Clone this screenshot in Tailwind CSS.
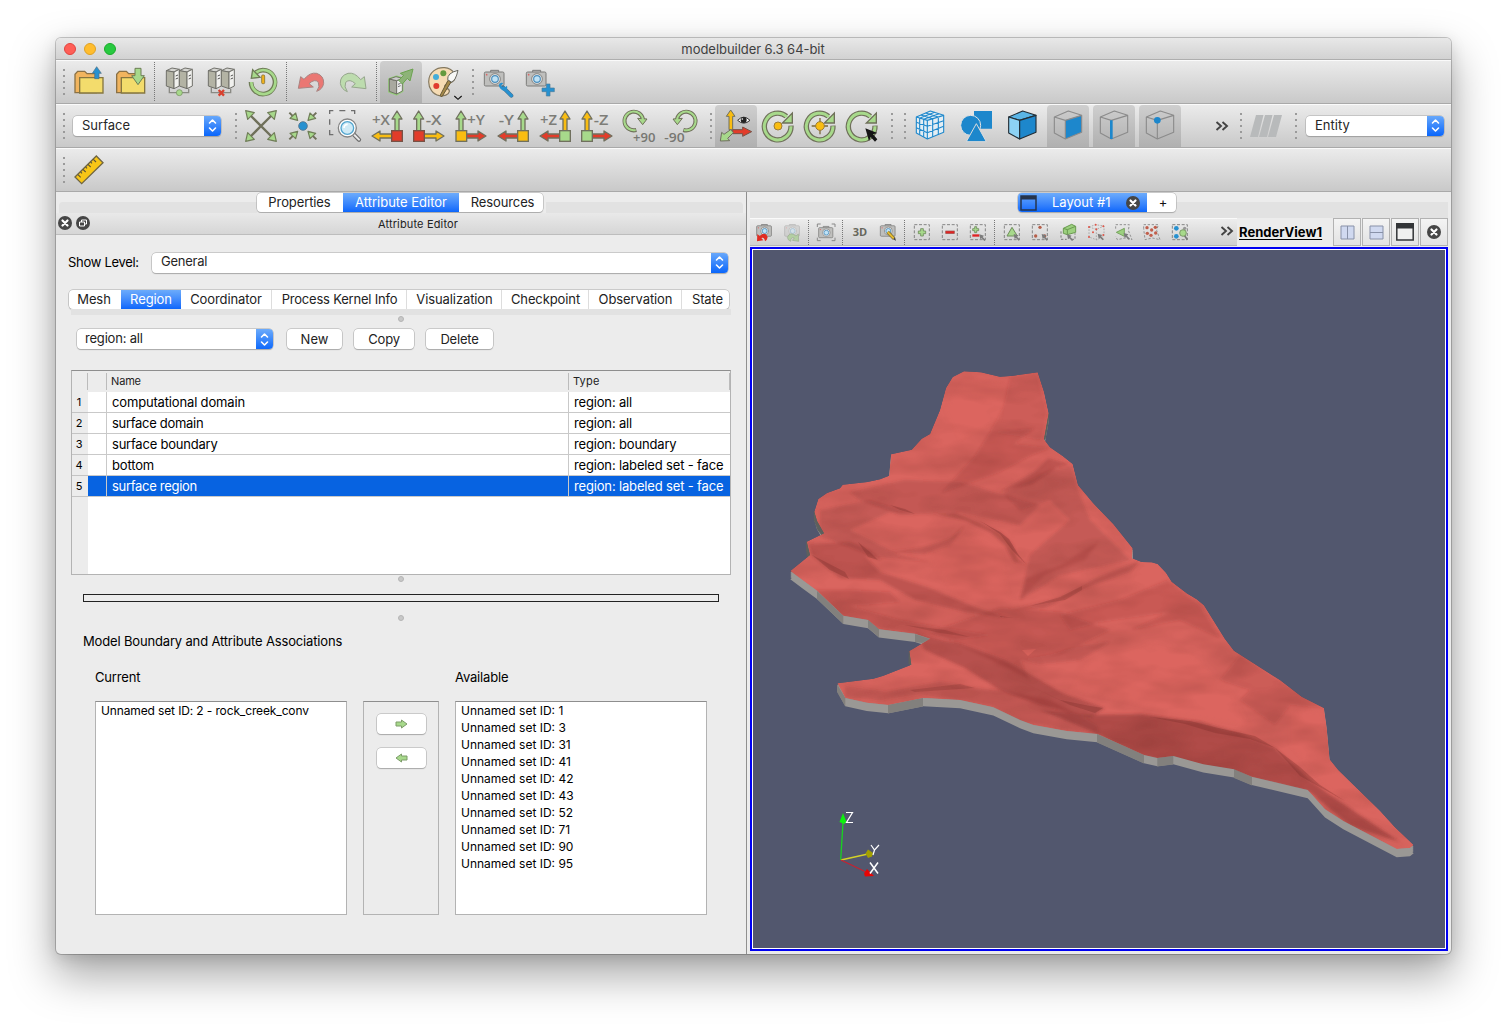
<!DOCTYPE html>
<html lang="en">
<head>
<meta charset="utf-8">
<title>modelbuilder 6.3 64-bit</title>
<script src="https://cdn.jsdelivr.net/npm/@tailwindcss/browser@4"></script>
</head>
<body class="h-[1028px] w-[1507px] overflow-hidden bg-white pt-[38px] pl-[56px] font-['Inter',sans-serif] text-[13px] text-black">

<!-- shared icon parts -->
<svg class="absolute size-0">
  <defs>
    <linearGradient id="chev" x1="0" y1="0" x2="0" y2="1"><stop offset="0" stop-color="#6cabfb"/><stop offset="1" stop-color="#0a66fb"/></linearGradient>
    <g id="cam"><path d="M-13,-21V-26H11V-21" fill="#c9c9c9" stroke="#777" stroke-width="3"/><rect x="-32" y="-21" width="59" height="42" rx="4" fill="#bfbfbd" stroke="#7b7b79" stroke-width="3"/><circle r="16" fill="#e9e9e9" stroke="#858583" stroke-width="3"/><circle r="10" fill="#bfe2f6" stroke="#4c8fbd" stroke-width="3.5"/><circle cx="-25" cy="-13" r="2.5" fill="#d66"/></g>
    <g id="srv" stroke="#6f6f69" stroke-width="3" stroke-linejoin="round"><path d="M0,8L17,0L39,4L23,12Z" fill="#d6d6d2"/><path d="M0,8L23,12V62L0,54Z" fill="#b3b3a4"/><path d="M23,12L39,4V54L23,62Z" fill="#f1f1ee"/><path d="M28,24L35,21M28,33L35,30" stroke="#555"/></g>
    <g id="wire" fill="none" stroke="#8b8b8b" stroke-width="3.4" stroke-linejoin="round"><path d="M0,18L42,0L82,13V64L33,84L0,66ZM0,18L33,28L82,13M33,28V84"/></g>
    <g id="up" stroke="#70705e" stroke-width="4" stroke-linejoin="round"><path d="M-6,0V-36H-15L0,-60L15,-36H6V0Z"/></g>
    <g id="rot"><path d="M86,46A40,40 0 1 1 72,18" fill="none" stroke="#6f705a" stroke-width="16"/><path d="M60,38H90V8Z" fill="#a7d98b" stroke="#6f705a" stroke-width="4"/><path d="M86,48A40,40 0 1 1 74,20" fill="none" stroke="#a7d98b" stroke-width="9"/></g>
    <g id="dash"><rect x="0" y="0" width="45" height="45" fill="none" stroke="#858585" stroke-width="3" stroke-dasharray="9 5"/></g>
    <g id="ptr"><path d="M0,0L14,4L10,8L19,17L15,20L7,12L3,15Z" fill="#7b7b7b"/></g>
    <g id="ud" fill="none" stroke="#fff" stroke-width="1.6" stroke-linecap="round" stroke-linejoin="round"><path d="M5.5,8L8.5,5L11.5,8M5.5,13L8.5,16L11.5,13"/></g>
    <g id="xx"><circle cx="7" cy="7" r="7" fill="#464646"/><path d="M4.5,4.5L9.5,9.5M9.5,4.5L4.5,9.5" stroke="#fff" stroke-width="2.2" stroke-linecap="round"/></g>
  </defs>
</svg>

<main class="flex h-[916px] w-[1395px] flex-col overflow-hidden rounded-[5px] bg-[#ececec] shadow-[0_0_0_1px_rgba(0,0,0,0.2),0_20px_44px_2px_rgba(0,0,0,0.34),0_4px_16px_rgba(0,0,0,0.13)]">

  <!-- title bar -->
  <header class="flex h-[22px] shrink-0 items-center border-b border-[#aeaeae] bg-linear-to-b from-[#e8e8e8] to-[#d2d2d2] pl-2">
    <div class="flex gap-2">
      <i class="size-3 rounded-full border border-[#e0443e] bg-[#ff5f57]"></i>
      <i class="size-3 rounded-full border border-[#dea123] bg-[#ffbd2e]"></i>
      <i class="size-3 rounded-full border border-[#1aab29] bg-[#28c940]"></i>
    </div>
    <h1 class="w-[1274px] pt-[2px] text-center text-[13px] leading-none tracking-[-0.05px] text-[#404040]">modelbuilder 6.3 64-bit</h1>
  </header>

  <!-- file toolbar -->
  <div class="flex h-[44px] shrink-0 items-center border-t border-b border-t-[#fafafa] border-b-[#a9a9a9] bg-linear-to-b from-[#ebebeb] to-[#c9c9c9]">
    <i class="mr-[3px] ml-[7px] h-[26px] w-[2px] bg-[repeating-linear-gradient(to_bottom,#9a9a9a_0_2px,transparent_2px_6px)]"></i>
    <svg class="size-[42px] shrink-0" viewBox="55 93 126 126"><path d="M76,188V133L84,124H105L112,131H140V188Z" fill="#f1b45e" stroke="#8a7146" stroke-width="4"/><path d="M90,189V143H160V189Z" fill="#f3dc6c" stroke="#85763f" stroke-width="4"/><path d="M135,146V130H128L141,110L155,130H148V146Z" fill="#2791d0" stroke="#4e6e80" stroke-width="2"/></svg>
    <svg class="size-[42px] shrink-0" viewBox="181 93 126 126"><path d="M201,188V133L209,124H230L237,131H265V188Z" fill="#f1b45e" stroke="#8a7146" stroke-width="4"/><path d="M215,189V143H285V189Z" fill="#f3dc6c" stroke="#85763f" stroke-width="4"/><path d="M256,115H274V137H284L265,164L246,137H256Z" fill="#a7d98b" stroke="#6c7d55" stroke-width="3"/></svg>
    <i class="mr-[3px] ml-[2px] h-[40px] w-px bg-[repeating-linear-gradient(to_bottom,#777_0_1px,transparent_1px_2px)]"></i>
    <svg class="size-[42px] shrink-0" viewBox="180 93 126 126"><g transform="translate(-144 0)"><path d="M358,172V188H416V176" fill="none" stroke="#8a8a84" stroke-width="4"/><use href="#srv" x="349" y="114"/><use href="#srv" x="388" y="114"/><circle cx="388" cy="188" r="9" fill="#a7d98b" stroke="#708a5b" stroke-width="2"/></g></svg>
    <svg class="size-[42px] shrink-0" viewBox="450 93 126 126"><path d="M484,172V188H542V176" fill="none" stroke="#8a8a84" stroke-width="4"/><use href="#srv" x="475" y="114"/><use href="#srv" x="514" y="114"/><path d="M506,180L522,197M522,180L506,197" stroke="#d8412f" stroke-width="7"/></svg>
    <svg class="size-[42px] shrink-0" viewBox="576 93 126 126"><path d="M603,156A36,36 0 1 0 618,127" fill="none" stroke="#6f7d57" stroke-width="14"/><path d="M608,119L604,145L630,142Z" fill="#a7d98b" stroke="#6f7d57" stroke-width="4"/><path d="M604,156A36,36 0 1 0 619,127" fill="none" stroke="#a7d98b" stroke-width="8"/><rect x="635" y="135" width="9" height="26" rx="3" fill="#f3b21b" stroke="#84733a" stroke-width="2.5"/></svg>
    <i class="mr-[3px] ml-[2px] h-[40px] w-px bg-[repeating-linear-gradient(to_bottom,#777_0_1px,transparent_1px_2px)]"></i>
    <svg class="size-[42px] shrink-0" viewBox="720 93 126 126"><path d="M745,175L752,140L762,148Q780,126 800,130Q822,137 821,160Q818,178 800,184Q811,170 805,157Q795,145 777,161L790,171Z" fill="#ea7773" stroke="#a98482" stroke-width="3"/></svg>
    <svg class="size-[42px] shrink-0" viewBox="846 93 126 126"><path d="M948,176L943,140L932,149Q914,126 894,130Q870,137 871,160Q874,178 892,185Q881,170 887,157Q899,145 916,161L905,171Z" fill="#bddcae" stroke="#96a68c" stroke-width="3"/></svg>
    <i class="mr-[3px] ml-[2px] h-[40px] w-px bg-[repeating-linear-gradient(to_bottom,#777_0_1px,transparent_1px_2px)]"></i>
    <div class="h-[42px] w-[42px] shrink-0 rounded-t bg-linear-to-b from-[#cfcfcf] to-[#b0b0b0]"><svg class="size-[42px]" viewBox="30 18 126 126"><path d="M58,72L80,65L97,70V108L80,118L58,110Z" fill="#c5c5be" stroke="#94ce77" stroke-width="7" stroke-linejoin="round"/><path d="M58,72L80,77V117L58,109Z" fill="#a9a99f" stroke="#65655c" stroke-width="2.5"/><path d="M80,77L97,70V108L80,117Z" fill="#eee" stroke="#65655c" stroke-width="2.5"/><path d="M58,72L78,65L97,70L80,77Z" fill="#ccc" stroke="#65655c" stroke-width="2.5"/><path d="M84,88L92,85M84,95L92,92" stroke="#555" stroke-width="2.5"/><path d="M91,55L129,42L120,78L112,70L97,87L86,76L101,61Z" fill="#8db378" stroke="#6ba34f" stroke-width="3"/></svg></div>
    <svg class="size-[42px] shrink-0" viewBox="156 18 126 126"><path d="M176,80C176,52 200,36 224,38C250,41 262,62 252,76C242,88 224,84 224,94C226,104 240,98 238,110C236,120 222,124 208,122C188,118 176,100 176,80Z" fill="#f6dcb4" stroke="#84785f" stroke-width="3.5"/><circle cx="220" cy="55" r="9" fill="#659a3e"/><circle cx="198" cy="66" r="9" fill="#45add8"/><circle cx="199" cy="93" r="9" fill="#e03a2e"/><path d="M210,122L234,76L243,81L216,125Z" fill="#a68a4a" stroke="#675a38" stroke-width="3"/><path d="M233,74Q231,54 264,46Q257,78 244,81Z" fill="#f7f7f5" stroke="#686860" stroke-width="3"/><path d="M253,123L264,133L275,123" fill="none" stroke="#111" stroke-width="3.5"/></svg>
    <i class="mr-[3px] ml-[8px] h-[26px] w-[2px] bg-[repeating-linear-gradient(to_bottom,#9a9a9a_0_2px,transparent_2px_6px)]"></i>
    <svg class="size-[42px] shrink-0" viewBox="321 18 126 126"><use href="#cam" x="375" y="72"/><path d="M399,97L424,122" stroke="#4a6f88" stroke-width="12" stroke-linecap="round"/><path d="M386,91Q388,80 400,84L393,92L402,100L411,92Q414,104 405,108Q391,107 386,91Z" fill="#2791d0"/><path d="M401,99L424,122" stroke="#2791d0" stroke-width="9" stroke-linecap="round"/></svg>
    <svg class="size-[42px] shrink-0" viewBox="447 18 126 126"><use href="#cam" x="501" y="72"/><path d="M529,87H540V99H553V110H540V123H529V110H516V99H529Z" fill="#2791d0" stroke="#4d7c99" stroke-width="2"/></svg>
  </div>

  <!-- view toolbar -->
  <div class="flex h-[44px] shrink-0 items-center border-t border-b border-t-[#fafafa] border-b-[#a9a9a9] bg-linear-to-b from-[#ebebeb] to-[#c9c9c9]">
    <i class="mr-[8px] ml-[7px] h-[26px] w-[2px] shrink-0 bg-[repeating-linear-gradient(to_bottom,#9a9a9a_0_2px,transparent_2px_6px)]"></i>
    <div class="mb-px flex h-[20px] w-[148px] shrink-0 items-center justify-between overflow-hidden rounded-[4px] bg-white pl-[9px] text-[#262626] shadow-[0_0_0_0.5px_#a8a8a8,0_1px_1px_#9a9a9a]"><span class="pb-px leading-none">Surface</span><svg class="h-[21px] w-[17px]" viewBox="0 0 17 21"><rect width="17" height="21" fill="url(#chev)"/><use href="#ud"/></svg></div>
    <i class="mr-[3px] ml-[14px] h-[26px] w-[2px] shrink-0 bg-[repeating-linear-gradient(to_bottom,#9a9a9a_0_2px,transparent_2px_6px)]"></i>
    <svg class="size-[42px] shrink-0" viewBox="570 225 126 126"><path d="M600,255L666,321M666,255L600,321" stroke="#6f705a" stroke-width="7"/><g fill="#a7d98b" stroke="#6f7d57" stroke-width="3.5" stroke-linejoin="round"><path d="M587,242L613,248L593,268Z"/><path d="M679,242L653,248L673,268Z"/><path d="M587,334L613,328L593,308Z"/><path d="M679,334L653,328L673,308Z"/></g></svg>
    <svg class="size-[42px] shrink-0" viewBox="696 225 126 126"><path d="M718,248L736,266M799,248L781,266M718,328L736,310M799,328L781,310" stroke="#6f705a" stroke-width="6"/><g fill="#a7d98b" stroke="#6f7d57" stroke-width="3.5" stroke-linejoin="round"><path d="M743,271L720,265L737,249Z"/><path d="M774,271L797,265L780,249Z"/><path d="M743,304L720,310L737,326Z"/><path d="M774,304L797,310L780,326Z"/></g><circle cx="759" cy="288" r="13" fill="#2791d0" stroke="#56748a" stroke-width="2.5"/></svg>
    <svg class="size-[42px] shrink-0" viewBox="822 225 126 126"><path d="M850,242H839V252M839,268V284M839,300V314H850M868,242H886M903,242H914V252" fill="none" stroke="#6e6e6e" stroke-width="4"/><path d="M911,313L927,329" stroke="#6f6f6f" stroke-width="13" stroke-linecap="round"/><path d="M913,315L927,329" stroke="#e8e8e8" stroke-width="6" stroke-linecap="round"/><circle cx="892" cy="294" r="27" fill="#fff" stroke="#858585" stroke-width="4"/><circle cx="892" cy="294" r="19" fill="#cfeaf6" stroke="#54a6cf" stroke-width="4"/><path d="M882,294A11,11 0 0 1 893,283" stroke="#fff" stroke-width="5" fill="none"/></svg>
    <svg class="size-[42px] shrink-0 font-['Open_Sans'] text-[41px] font-semibold" viewBox="-12 150 126 126"><text x="6" y="210" textLength="54" lengthAdjust="spacingAndGlyphs" fill="#7d7d78">+X</text><use href="#up" x="81" y="228" fill="#a7d98b"/><use href="#up" transform="translate(66 243) rotate(-90)" fill="#f9bd12"/><rect x="65" y="227" width="32" height="32" fill="#e23c2a" stroke="#775246" stroke-width="4"/></svg>
    <svg class="size-[42px] shrink-0 font-['Open_Sans'] text-[41px] font-semibold" viewBox="114 150 126 126"><text x="167" y="210" textLength="48" lengthAdjust="spacingAndGlyphs" fill="#7d7d78">-X</text><use href="#up" x="146" y="228" fill="#a7d98b"/><use href="#up" transform="translate(162 243) rotate(90)" fill="#f9bd12"/><rect x="131" y="227" width="32" height="32" fill="#e23c2a" stroke="#775246" stroke-width="4"/></svg>
    <svg class="size-[42px] shrink-0 font-['Open_Sans'] text-[41px] font-semibold" viewBox="240 150 126 126"><text x="291" y="210" textLength="54" lengthAdjust="spacingAndGlyphs" fill="#7d7d78">+Y</text><use href="#up" x="273" y="228" fill="#a7d98b"/><use href="#up" transform="translate(288 243) rotate(90)" fill="#e23c2a"/><rect x="258" y="227" width="32" height="32" fill="#f9bd12" stroke="#70705e" stroke-width="4"/></svg>
    <svg class="size-[42px] shrink-0 font-['Open_Sans'] text-[41px] font-semibold" viewBox="366 150 126 126"><text x="386" y="210" textLength="46" lengthAdjust="spacingAndGlyphs" fill="#7d7d78">-Y</text><use href="#up" x="459" y="228" fill="#a7d98b"/><use href="#up" transform="translate(444 243) rotate(-90)" fill="#e23c2a"/><rect x="443" y="227" width="32" height="32" fill="#f9bd12" stroke="#70705e" stroke-width="4"/></svg>
    <svg class="size-[42px] shrink-0 font-['Open_Sans'] text-[41px] font-semibold" viewBox="492 150 126 126"><text x="510" y="210" textLength="51" lengthAdjust="spacingAndGlyphs" fill="#7d7d78">+Z</text><use href="#up" x="585" y="228" fill="#f9bd12"/><use href="#up" transform="translate(570 243) rotate(-90)" fill="#e23c2a"/><rect x="569" y="227" width="32" height="32" fill="#a7d98b" stroke="#70705e" stroke-width="4"/></svg>
    <svg class="size-[42px] shrink-0 font-['Open_Sans'] text-[41px] font-semibold" viewBox="618 150 126 126"><text x="671" y="210" textLength="44" lengthAdjust="spacingAndGlyphs" fill="#7d7d78">-Z</text><use href="#up" x="651" y="228" fill="#f9bd12"/><use href="#up" transform="translate(666 243) rotate(90)" fill="#e23c2a"/><rect x="635" y="227" width="32" height="32" fill="#a7d98b" stroke="#70705e" stroke-width="4"/></svg>
    <svg class="size-[42px] shrink-0 font-['Open_Sans'] text-[36px] font-semibold" viewBox="744 150 126 126"><path d="M799,225A28,28 0 1 1 819,193" fill="none" stroke="#6f705a" stroke-width="12"/><path d="M803,190L831,192L818,209Z" fill="#a7d98b" stroke="#6f705a" stroke-width="3"/><path d="M797,225A28,28 0 1 1 819,195" fill="none" stroke="#a7d98b" stroke-width="6"/><text x="789" y="260" textLength="67" lengthAdjust="spacingAndGlyphs" fill="#777772">+90</text></svg>
    <svg class="size-[42px] shrink-0 font-['Open_Sans'] text-[36px] font-semibold" viewBox="870 150 126 126"><path d="M940,225A28,28 0 1 0 921,193" fill="none" stroke="#6f705a" stroke-width="12"/><path d="M937,190L909,192L922,209Z" fill="#a7d98b" stroke="#6f705a" stroke-width="3"/><path d="M942,225A28,28 0 1 0 921,195" fill="none" stroke="#a7d98b" stroke-width="6"/><text x="883" y="260" textLength="61" lengthAdjust="spacingAndGlyphs" fill="#777772">-90</text></svg>
    <i class="mr-[3px] ml-[8px] h-[26px] w-[2px] shrink-0 bg-[repeating-linear-gradient(to_bottom,#9a9a9a_0_2px,transparent_2px_6px)]"></i>
    <div class="size-[42px] shrink-0 rounded-t bg-linear-to-b from-[#cfcfcf] to-[#b0b0b0]"><svg class="size-[42px]" viewBox="75 30 126 126"><path d="M117,104V64H109L122,45L135,64H128V104Z" fill="#f9bd12" stroke="#70705e" stroke-width="3"/><path d="M128,104H158V96L185,110L158,124V116H128Z" fill="#e23c2a" stroke="#775246" stroke-width="3"/><path d="M122,104L130,113L113,130L119,137L91,138L95,112L102,118Z" fill="#a7d98b" stroke="#70705e" stroke-width="3"/><path d="M143,76Q161,57 180,76Q161,93 143,76Z" fill="#fff" stroke="#333" stroke-width="3"/><circle cx="161" cy="75" r="9" fill="#222"/><circle cx="157" cy="72" r="2.5" fill="#fff"/></svg></div>
    <svg class="size-[42px] shrink-0" viewBox="201 30 126 126"><use href="#rot" x="217" y="46"/><circle cx="264" cy="93" r="12" fill="#f9bd12" stroke="#9c7c37" stroke-width="3"/></svg>
    <svg class="size-[42px] shrink-0" viewBox="327 30 126 126"><use href="#rot" x="343" y="46"/><path d="M365,93H414M390,69V118" stroke="#7b6a3b" stroke-width="4"/><circle cx="390" cy="93" r="13" fill="#f9bd12" stroke="#9c7c37" stroke-width="3"/></svg>
    <svg class="size-[42px] shrink-0" viewBox="453 30 126 126"><use href="#rot" x="469" y="46"/><path d="M526,100L562,114L549,118L562,133L555,140L542,126L537,138Z" fill="#161616"/></svg>
    <i class="ml-[8px] h-[26px] w-[2px] shrink-0 bg-[repeating-linear-gradient(to_bottom,#9a9a9a_0_2px,transparent_2px_6px)]"></i>
    <i class="mr-[3px] ml-[11px] h-[26px] w-[2px] shrink-0 bg-[repeating-linear-gradient(to_bottom,#9a9a9a_0_2px,transparent_2px_6px)]"></i>
    <div class="flex shrink-0 gap-1">
      <svg class="size-[42px]" viewBox="657 30 126 126"><g transform="translate(679 48)" stroke="#2189cc" stroke-width="3.4" stroke-linejoin="round"><path d="M0,18L42,0L82,13V64L33,84L0,66Z" fill="#e4eef4"/><path fill="none" d="M0,18L33,28L82,13M33,28V84M0,34L33,46L82,29M0,50L33,65L82,46M10,21V71M22,25V77M49,22V78M66,17V71M14,12L49,23M28,6L66,18M11,21L55,4M22,25L68,8"/></g></svg>
      <svg class="size-[42px]" viewBox="795 30 126 126"><path d="M852,48H906V101H852Z" fill="#1d87cc"/><circle cx="842" cy="91" r="30" fill="#1d87cc" stroke="#e3e3e3" stroke-width="3"/><path d="M859,86L889,140H829Z" fill="#1d87cc" stroke="#dcdcdc" stroke-width="3"/></svg>
      <svg class="size-[42px]" viewBox="933 30 126 126"><g transform="translate(956 48)" stroke="#222d35" stroke-width="3.4" stroke-linejoin="round"><path d="M0,18L42,0L82,13L33,28Z" fill="#5ab5e6"/><path d="M0,18L33,28V84L0,66Z" fill="#8dd2f4"/><path d="M33,28L82,13V64L33,84Z" fill="#1d87cc"/></g></svg>
      <div class="size-[42px] rounded-t bg-linear-to-b from-[#cfcfcf] to-[#b0b0b0]"><svg class="size-[42px]" viewBox="1071 30 126 126"><path d="M1126,76L1175,61V112L1126,132Z" fill="#1d87cc"/><use href="#wire" x="1093" y="48"/></svg></div>
      <div class="size-[42px] rounded-t bg-linear-to-b from-[#cfcfcf] to-[#b0b0b0]"><svg class="size-[42px]" viewBox="39 30 126 126"><use href="#wire" x="61" y="48"/><path d="M94,76V132" stroke="#1d87cc" stroke-width="8"/></svg></div>
      <div class="size-[42px] rounded-t bg-linear-to-b from-[#cfcfcf] to-[#b0b0b0]"><svg class="size-[42px]" viewBox="177 30 126 126"><use href="#wire" x="199" y="48"/><circle cx="232" cy="76" r="10" fill="#1d87cc"/></svg></div>
    </div>
    <svg class="ml-[34px] h-[12px] w-[14px] shrink-0" viewBox="0 0 14 12"><path d="M1.5,2L6,6L1.5,10M7.5,2L12,6L7.5,10" fill="none" stroke="#444" stroke-width="1.9"/></svg>
    <i class="mr-[7px] ml-[11px] h-[26px] w-[2px] shrink-0 bg-[repeating-linear-gradient(to_bottom,#9a9a9a_0_2px,transparent_2px_6px)]"></i>
    <svg class="h-[24px] w-[34px] shrink-0" viewBox="0 0 34 24"><path d="M7,1H14.5L9,23H1ZM16,1H23.5L18,23H10ZM25,1H33L27,23H19Z" fill="#b8babb"/></svg>
    <i class="mr-[9px] ml-[12px] h-[26px] w-[2px] shrink-0 bg-[repeating-linear-gradient(to_bottom,#9a9a9a_0_2px,transparent_2px_6px)]"></i>
    <div class="mb-px flex h-[20px] w-[138px] shrink-0 items-center justify-between overflow-hidden rounded-[4px] bg-white pl-[9px] text-[#262626] shadow-[0_0_0_0.5px_#a8a8a8,0_1px_1px_#9a9a9a]"><span class="pb-px leading-none">Entity</span><svg class="h-[21px] w-[17px]" viewBox="0 0 17 21"><rect width="17" height="21" fill="url(#chev)"/><use href="#ud"/></svg></div>
  </div>

  <!-- ruler toolbar -->
  <div class="flex h-[44px] shrink-0 items-center border-t border-b border-t-[#fafafa] border-b-[#a9a9a9] bg-linear-to-b from-[#ebebeb] to-[#c9c9c9]">
    <i class="mr-[3px] ml-[7px] h-[26px] w-[2px] bg-[repeating-linear-gradient(to_bottom,#9a9a9a_0_2px,transparent_2px_6px)]"></i>
    <svg class="size-[42px]" viewBox="54 357 126 126"><path d="M75,441L139,378L159,398L95,461Z" fill="#f8c617" stroke="#6f6542" stroke-width="4"/><path d="M84,434L92,442M92,426L96,430M99,418L107,426M107,411L111,415M114,403L122,411M122,396L126,400M130,388L138,396" stroke="#5e5536" stroke-width="3.5"/></svg>
  </div>

  <div class="flex min-h-0 flex-1">
    <!-- attribute panel -->
    <section class="flex w-[691px] shrink-0 flex-col border-r border-[#8f8f8f]">
      <div class="flex h-[21px] items-end px-[3px]">
        <div class="h-[11px] w-[198px] rounded-tl bg-[#e2e2e2]"></div>
        <div class="flex h-[19px] w-[286px] self-center overflow-hidden rounded-[4px] bg-white text-center leading-[19px] shadow-[0_0_0_0.5px_#a8a8a8,0_1px_1px_#b0b0b0]">
          <span class="w-[86px] pr-px tracking-[-0.1px] text-[#222]">Properties</span><span class="w-[116px] bg-linear-to-b from-[#6cabfb] to-[#0b66fb] text-white">Attribute Editor</span><span class="w-[84px] pl-[3px] tracking-[-0.1px] text-[#222]">Resources</span>
        </div>
        <div class="ml-[3px] h-[11px] flex-1 rounded-tr bg-[#e2e2e2]"></div>
      </div>
      <div class="flex h-[22px] items-center border-b border-[#bdbdbd] bg-linear-to-b from-[#e9e9e9] to-[#d6d6d6] pl-[2px]">
        <svg class="mb-px size-[14px]" viewBox="0 0 14 14"><use href="#xx"/></svg>
        <svg class="mb-px ml-1 size-[14px]" viewBox="0 0 14 14"><circle cx="7" cy="7" r="7" fill="#464646"/><path d="M5.5,4H10.5V8H5.5Z" fill="none" stroke="#fff" stroke-width="1"/><path d="M3.5,6H8.5V10H3.5Z" fill="#464646" stroke="#fff" stroke-width="1"/></svg>
        <h2 class="w-[656px] pt-[2px] text-center text-[11px] leading-none tracking-[0.15px] text-[#222]">Attribute Editor</h2>
      </div>

      <div class="mt-[17px] ml-[12px] flex h-[21px] items-center">
        <span class="w-[84px] leading-none tracking-[-0.3px]">Show Level:</span>
        <div class="flex h-[20px] w-[576px] items-center justify-between overflow-hidden rounded-[4px] bg-white pl-[9px] text-[#262626] shadow-[0_0_0_0.5px_#a8a8a8,0_1px_1px_#b0b0b0]"><span class="pb-[2px] leading-none tracking-[-0.25px]">General</span><svg class="h-[21px] w-[17px]" viewBox="0 0 17 21"><rect width="17" height="21" fill="url(#chev)"/><use href="#ud"/></svg></div>
      </div>

      <nav class="mt-[17px] ml-[13px] flex h-[19px] w-[660px] overflow-hidden rounded-[4px] bg-white text-center leading-[19px] tracking-[-0.1px] text-[#222] shadow-[0_0_0_0.5px_#a8a8a8,0_1px_1px_#b0b0b0]">
        <span class="w-[52px] pr-[2px]">Mesh</span><span class="w-[60px] bg-linear-to-b from-[#6cabfb] to-[#0b66fb] text-white">Region</span><span class="w-[91px] border-r border-[#ddd]">Coordinator</span><span class="w-[135px] border-r border-[#ddd] pl-px tracking-[-0.2px]">Process Kernel Info</span><span class="w-[95px] border-r border-[#ddd] pl-px">Visualization</span><span class="w-[87px] border-r border-[#ddd] pl-px">Checkpoint</span><span class="w-[93px] border-r border-[#ddd] pl-px">Observation</span><span class="w-[47px] pl-[4px]">State</span>
      </nav>
      <div class="ml-[15px] h-[6px] w-[660px] bg-[#e2e2e2]"></div>
      <i class="mt-px ml-[342px] size-[6px] rounded-full border border-[#b5b5b5] bg-[#c8c8c8]"></i>

      <div class="mt-[7px] ml-[21px] flex h-[19px] text-[#222]">
        <div class="flex h-[20px] w-[196px] items-center justify-between overflow-hidden rounded-[4px] bg-white pl-[8px] shadow-[0_0_0_0.5px_#a8a8a8,0_1px_1px_#b0b0b0]"><span class="pb-px leading-none tracking-[-0.2px]">region: all</span><svg class="h-[21px] w-[17px]" viewBox="0 0 17 21"><rect width="17" height="21" fill="url(#chev)"/><use href="#ud"/></svg></div>
        <button class="ml-[14px] h-[20px] w-[55px] rounded-[4px] bg-white leading-none shadow-[0_0_0_0.5px_#a8a8a8,0_1px_1px_#b0b0b0]">New</button>
        <button class="ml-[12px] h-[20px] w-[60px] rounded-[4px] bg-white leading-none tracking-[-0.2px] shadow-[0_0_0_0.5px_#a8a8a8,0_1px_1px_#b0b0b0]">Copy</button>
        <button class="ml-[12px] h-[20px] w-[67px] rounded-[4px] bg-white leading-none tracking-[-0.2px] shadow-[0_0_0_0.5px_#a8a8a8,0_1px_1px_#b0b0b0]">Delete</button>
      </div>

      <!-- attribute table -->
      <div class="mt-[22px] ml-[15px] flex h-[205px] w-[660px] flex-col border border-[#b3b3b3] border-t-[#8e8e8e] bg-[linear-gradient(to_right,#ececec_16px,#fff_16px)] tracking-[-0.16px]">
        <div class="flex h-[21px] shrink-0 bg-[#ececec] pt-[2px] text-[11px] leading-[17px] text-[#222]"><span class="h-[17px] w-[16px] border-r border-[#bbb]"></span><span class="h-[17px] w-[19px] border-r border-[#bbb]"></span><span class="h-[17px] w-[462px] border-r border-[#bbb] pl-[4px]">Name</span><span class="h-[17px] flex-1 border-r border-[#bbb] pl-[4px] tracking-[0.2px]">Type</span></div>
        <div class="flex h-[21px] shrink-0 leading-[21px]"><span class="w-[16px] border-b border-[#c4c4c4] pr-[2px] text-center text-[11px]">1</span><span class="w-[19px] border-r border-b border-[#c9c9c9]"></span><span class="w-[462px] border-r border-b border-[#c9c9c9] pl-[5px]">computational domain</span><span class="flex-1 border-b border-[#c9c9c9] pl-[5px]">region: all</span></div>
        <div class="flex h-[21px] shrink-0 leading-[21px]"><span class="w-[16px] border-b border-[#c4c4c4] pr-[2px] text-center text-[11px]">2</span><span class="w-[19px] border-r border-b border-[#c9c9c9]"></span><span class="w-[462px] border-r border-b border-[#c9c9c9] pl-[5px] tracking-[-0.3px]">surface domain</span><span class="flex-1 border-b border-[#c9c9c9] pl-[5px]">region: all</span></div>
        <div class="flex h-[21px] shrink-0 leading-[21px]"><span class="w-[16px] border-b border-[#c4c4c4] pr-[2px] text-center text-[11px]">3</span><span class="w-[19px] border-r border-b border-[#c9c9c9]"></span><span class="w-[462px] border-r border-b border-[#c9c9c9] pl-[5px] tracking-[-0.22px]">surface boundary</span><span class="flex-1 border-b border-[#c9c9c9] pl-[5px]">region: boundary</span></div>
        <div class="flex h-[21px] shrink-0 leading-[21px]"><span class="w-[16px] border-b border-[#c4c4c4] pr-[2px] text-center text-[11px]">4</span><span class="w-[19px] border-r border-b border-[#c9c9c9]"></span><span class="w-[462px] border-r border-b border-[#c9c9c9] pl-[5px]">bottom</span><span class="flex-1 border-b border-[#c9c9c9] pl-[5px] whitespace-nowrap">region: labeled set - face</span></div>
        <div class="flex h-[21px] shrink-0 leading-[21px]"><span class="w-[16px] border-b border-[#c4c4c4] pr-[2px] text-center text-[11px]">5</span><span class="w-[19px] border-r border-b border-[#c9c9c9] bg-[#0763e1]"></span><span class="w-[462px] border-r border-b border-[#c9c9c9] bg-[#0763e1] pl-[5px] tracking-[-0.3px] text-white">surface region</span><span class="flex-1 border-b border-[#c9c9c9] bg-[#0763e1] pl-[5px] whitespace-nowrap text-white">region: labeled set - face</span></div>
      </div>
      <i class="mt-px ml-[342px] size-[6px] shrink-0 rounded-full border border-[#b5b5b5] bg-[#c8c8c8]"></i>
      <div class="mt-[12px] ml-[27px] h-[8px] w-[636px] shrink-0 border border-[#222]"></div>
      <i class="mt-[13px] ml-[342px] size-[6px] shrink-0 rounded-full border border-[#b5b5b5] bg-[#c8c8c8]"></i>

      <h3 class="mt-[12px] ml-[27px] h-[16px] leading-[16px] tracking-[-0.16px]">Model Boundary and Attribute Associations</h3>
      <div class="mt-[20px] ml-[39px] flex h-[16px] leading-[16px] tracking-[-0.17px]"><span class="w-[360px]">Current</span><span>Available</span></div>
      <div class="mt-[16px] ml-[39px] flex h-[214px] text-[12px] leading-[17px]">
        <ul class="w-[252px] border border-[#b3b3b3] border-t-[#8e8e8e] bg-white pl-[5px] tracking-[-0.13px]"><li>Unnamed set ID: 2 - rock_creek_conv</li></ul>
        <div class="mx-[16px] flex w-[76px] flex-col items-center gap-[14px] border border-[#b3b3b3] border-t-[#8e8e8e] pt-[12px]">
          <button class="flex h-[20px] w-[49px] items-center justify-center rounded-[4px] bg-white shadow-[0_0_0_0.5px_#a8a8a8,0_1px_1px_#b0b0b0]"><svg class="h-[10px] w-[13px]" viewBox="0 0 13 10"><path d="M1,3H6.5V1L12,5L6.5,9V7H1Z" fill="#a7d98b" stroke="#7c9c69"/></svg></button>
          <button class="flex h-[20px] w-[49px] items-center justify-center rounded-[4px] bg-white shadow-[0_0_0_0.5px_#a8a8a8,0_1px_1px_#b0b0b0]"><svg class="h-[10px] w-[13px]" viewBox="0 0 13 10"><path d="M12,3H6.5V1L1,5L6.5,9V7H12Z" fill="#a7d98b" stroke="#7c9c69"/></svg></button>
        </div>
        <ul class="w-[252px] border border-[#b3b3b3] border-t-[#8e8e8e] bg-white pl-[5px]"><li>Unnamed set ID: 1</li><li>Unnamed set ID: 3</li><li>Unnamed set ID: 31</li><li>Unnamed set ID: 41</li><li>Unnamed set ID: 42</li><li>Unnamed set ID: 43</li><li>Unnamed set ID: 52</li><li>Unnamed set ID: 71</li><li>Unnamed set ID: 90</li><li>Unnamed set ID: 95</li></ul>
      </div>
    </section>

    <!-- render view -->
    <section class="flex flex-1 flex-col pr-[3px] pl-[3px]">
      <div class="flex h-[26px] bg-[linear-gradient(to_bottom,#ececec_10px,#e2e2e2_10px)] pt-px pl-[268px]">
        <div class="flex h-[19px] w-[158px] overflow-hidden rounded-[4px] bg-white leading-[19px] shadow-[0_0_0_0.5px_#a8a8a8,0_1px_1px_#b0b0b0]">
          <div class="flex w-[129px] shrink-0 items-center bg-linear-to-b from-[#6cabfb] to-[#0b66fb] pl-[2px] text-white"><svg class="h-[16px] w-[17px]" viewBox="0 0 17 16"><path d="M1,1H16V15H1Z" fill="none" stroke="#26344c" stroke-width="1.5"/><path d="M1,1H16V4.5H1Z" fill="#26344c"/></svg><span class="ml-[15px]">Layout #1</span><svg class="ml-auto mr-[7px] size-[14px]" viewBox="0 0 14 14"><use href="#xx"/></svg></div>
          <span class="flex-1 pl-[3px] text-center text-[#111]">+</span>
        </div>
      </div>
      <div class="flex h-[28px] shrink-0">
        <div class="flex h-[28px] w-[487px] shrink-0 items-start border-t border-b border-t-[#fafafa] border-b-[#b5b5b5] bg-linear-to-b from-[#ededed] to-[#cfcfcf]">
          <svg class="h-[27px] w-[28px]" viewBox="15 85 84 81"><use href="#cam" transform="translate(59 121) scale(.75)"/><path d="M36,152L37,130L44,136Q62,121 68,140Q66,150 60,152Q58,138 49,142L55,149Z" fill="#e02c22"/></svg>
          <svg class="h-[27px] w-[28px]" viewBox="99 85 84 81"><use href="#cam" transform="translate(143 121) scale(.75)" opacity=".4"/><path d="M161,152L160,130L153,136Q135,121 127,140Q129,150 137,152Q137,138 148,142L142,149Z" fill="#b3cfa3" stroke="#9aab90" stroke-width="2"/></svg>
          <i class="mr-[3px] ml-[2px] mt-[1px] h-[25px] w-px bg-[repeating-linear-gradient(to_bottom,#777_0_1px,transparent_1px_2px)]"></i>
          <svg class="h-[27px] w-[28px]" viewBox="201 86 84 81"><use href="#cam" transform="translate(244 127) scale(.72)"/><path d="M217,110V101H227M260,101H270V110M217,142V151H227M260,151H270V142" fill="none" stroke="#888" stroke-width="3"/></svg>
          <i class="mr-[3px] ml-[2px] mt-[1px] h-[25px] w-px bg-[repeating-linear-gradient(to_bottom,#777_0_1px,transparent_1px_2px)]"></i>
          <span class="w-[28px] text-center font-['Open_Sans'] text-[11px] leading-[26px] font-bold text-[#67675c]">3D</span>
          <svg class="h-[27px] w-[28px]" viewBox="387 85 84 81"><use href="#cam" transform="translate(430 121) scale(.75)"/><path d="M428,124L447,144" stroke="#776a33" stroke-width="10"/><path d="M428,124L447,144" stroke="#e5bb30" stroke-width="6"/><path d="M444,146L453,150L450,140Z" fill="#444"/></svg>
          <i class="mr-[3px] ml-[2px] mt-[1px] h-[25px] w-px bg-[repeating-linear-gradient(to_bottom,#777_0_1px,transparent_1px_2px)]"></i>
          <svg class="h-[27px] w-[28px]" viewBox="489 86 84 81"><use href="#dash" x="508" y="103"/><path d="M527,115H535V122H542V130H535V137H527V130H520V122H527Z" fill="#a7d98b" stroke="#6f8d5c" stroke-width="2.5"/></svg>
          <svg class="h-[27px] w-[28px]" viewBox="573 86 84 81"><use href="#dash" x="592" y="103"/><rect x="602" y="122" width="26" height="8" fill="#e02424" stroke="#9d5550" stroke-width="2"/></svg>
          <svg class="h-[27px] w-[28px]" viewBox="657 86 84 81"><use href="#dash" x="676" y="103"/><path d="M689,109H695V115H701V121H695V127H689V121H683V115H689Z" fill="#a7d98b" stroke="#6f8d5c" stroke-width="2.5"/><rect x="682" y="132" width="21" height="7" fill="#e02424"/><use href="#ptr" x="703" y="132"/></svg>
          <i class="mr-[3px] ml-[2px] mt-[1px] h-[25px] w-px bg-[repeating-linear-gradient(to_bottom,#777_0_1px,transparent_1px_2px)]"></i>
          <svg class="h-[27px] w-[28px]" viewBox="759 86 84 81"><use href="#dash" x="778" y="103"/><path d="M801,111L817,137H786Z" fill="#a7d98b" stroke="#6f8d5c" stroke-width="3"/><use href="#ptr" x="806" y="131"/></svg>
          <svg class="h-[27px] w-[28px]" viewBox="843 86 84 81"><use href="#dash" x="862" y="103"/><g fill="#b65f4a"><circle cx="885" cy="111" r="5"/><circle cx="872" cy="137" r="5"/><circle cx="899" cy="137" r="5"/></g><use href="#ptr" x="890" y="131"/></svg>
          <svg class="h-[27px] w-[28px]" viewBox="927 87 84 81"><path d="M948,124V148H965M980,148H990V130" fill="none" stroke="#777" stroke-width="3" stroke-dasharray="7 5"/><path d="M955,115L980,103L992,109V127L967,134L955,130Z" fill="#9cd07f" stroke="#6a9a50" stroke-width="3"/><path d="M955,115L967,119L992,109M967,119V134" stroke="#6a9a50" stroke-width="3" fill="none"/><use href="#ptr" x="966" y="133"/></svg>
          <svg class="h-[27px] w-[28px]" viewBox="1011 86 84 81"><path d="M1032,110L1052,103L1077,107V136L1056,149L1032,140ZM1032,110L1054,117L1077,107M1054,117V149" fill="none" stroke="#a0a0a0" stroke-width="2.5" stroke-dasharray="5 4"/><g fill="#df5548"><circle cx="1032" cy="110" r="3"/><circle cx="1052" cy="103" r="3"/><circle cx="1075" cy="108" r="3"/><circle cx="1054" cy="117" r="3"/><circle cx="1032" cy="140" r="3"/><circle cx="1044" cy="126" r="3"/><circle cx="1075" cy="134" r="3"/></g><use href="#ptr" x="1058" y="130"/></svg>
          <svg class="h-[27px] w-[28px]" viewBox="45 86 84 81"><path d="M62,115V103H103L100,120L111,148L90,143L67,148L62,138" fill="none" stroke="#929292" stroke-width="3" stroke-dasharray="7 5"/><path d="M64,126L88,114V138Z" fill="#9cd07f" stroke="#6a9a50" stroke-width="2.5"/><use href="#ptr" x="86" y="128"/></svg>
          <svg class="h-[27px] w-[28px]" viewBox="129 86 84 81"><path d="M146,115V103H190L185,120L195,148L172,143L150,148Z" fill="none" stroke="#929292" stroke-width="3" stroke-dasharray="7 5"/><g fill="#c15e4b"><circle cx="156" cy="112" r="5"/><circle cx="170" cy="119" r="5"/><circle cx="181" cy="111" r="5"/><circle cx="157" cy="129" r="5"/><circle cx="168" cy="135" r="5"/><circle cx="182" cy="128" r="5"/></g></svg>
          <svg class="h-[27px] w-[28px]" viewBox="213 86 84 81"><use href="#dash" x="232" y="103"/><circle cx="244" cy="114" r="7" fill="#2791d0"/><circle cx="244" cy="138" r="7" fill="#2791d0"/><circle cx="269" cy="114" r="5" fill="#999"/><path d="M266,132L277,148" stroke="#777" stroke-width="5"/><circle cx="264" cy="128" r="10" fill="#a7d98b" stroke="#6f8d5c" stroke-width="2.5"/></svg>
          <svg class="mt-[6px] ml-[26px] h-[12px] w-[14px]" viewBox="0 0 14 12"><path d="M1.5,2L6,6L1.5,10M7.5,2L12,6L7.5,10" fill="none" stroke="#444" stroke-width="1.9"/></svg>
        </div>
        <a class="ml-[2px] w-[94px] text-[13px] leading-[29px] font-bold tracking-[0.02px] underline underline-offset-2">RenderView1</a>
        <div class="flex gap-px">
          <span class="flex h-[28px] w-[28px] items-center justify-center border border-[#b2b2b2] bg-linear-to-b from-[#f4f4f4] to-[#e2e2e2]"><svg class="size-[15px]" viewBox="0 0 15 15"><path d="M1,1H14V14H1ZM7.5,1V14" fill="#d0d9f0" stroke="#8891a8"/></svg></span>
          <span class="flex h-[28px] w-[28px] items-center justify-center border border-[#b2b2b2] bg-linear-to-b from-[#f4f4f4] to-[#e2e2e2]"><svg class="size-[15px]" viewBox="0 0 15 15"><path d="M1,1H14V14H1ZM1,7.5H14" fill="#d0d9f0" stroke="#8891a8"/></svg></span>
          <span class="flex h-[28px] w-[28px] items-center justify-center border border-[#b2b2b2] bg-linear-to-b from-[#f4f4f4] to-[#e2e2e2]"><svg class="h-[18px] w-[18px]" viewBox="0 0 18 18"><path d="M.8,1H17.2V17H.8Z" fill="#f0f0f0" stroke="#333538" stroke-width="1.5"/><path d="M0,0H18V5.5H0Z" fill="#333538"/></svg></span>
          <span class="flex h-[28px] w-[28px] items-center justify-center border border-[#b2b2b2] bg-linear-to-b from-[#f4f4f4] to-[#e2e2e2]"><svg class="size-[14px]" viewBox="0 0 14 14"><use href="#xx"/></svg></span>
        </div>
      </div>

      <div class="mt-px h-[704px] w-[698px] border-2 border-[#0000f2] bg-white p-px">
        <svg class="block h-[698px] w-[692px] bg-[#52576e]" viewBox="753 250 692 698">
          <defs>
            <path id="land" d="M790.3,571L810,555L806.7,541.7L824,533.3L817,521L814.3,511.7L818.3,499L827,493L840,488.3L842.7,484.7L867.3,482L880,479.3L889,475.7L891,454.3L911.7,449.7L921.7,438.7L930,434L940,410L946,388L952.7,377L964,371.3L981,372.3L1000,376.7L1013.3,375.7L1037.7,372.3L1044,391.7L1048.7,413.3L1044,439.3L1050,447.3L1062.7,456L1072.7,464L1078,485L1093.3,503.3L1113.3,524L1132.7,548.3L1132.3,558.3L1141.7,562L1151.7,562.3L1157.7,564L1166,572.7L1171.7,581.7L1186.7,593.3L1196.7,599.3L1204,605.3L1225,639L1234,650.7L1280,680L1301.7,696.7L1324,708L1326.7,726.7L1329.7,759.3L1338.3,770L1380,810.7L1395,827.3L1413.7,845L1410,848L1396.7,849L1373.3,836.7L1343.3,821L1325,809.3L1307.7,790L1251.7,776.7L1234,769.3L1203.3,764.3L1173.3,756L1157.3,758L1144,755L1097.3,734L1066.7,731L1033.3,725L1020,720L993.3,707.3L960,700L923.3,698L888.3,705L866.7,702.7L845.3,698L837.3,683.3L873.3,678.7L883.3,675.7L911.3,664.7L909.3,651L930,638.7L915,633.7L879,629.3L868,620L843.3,615.7L817,590.7L803.3,580.7Z"/>
            <clipPath id="lc"><use href="#land"/></clipPath>
            <filter id="soft" x="-10%" y="-10%" width="120%" height="120%"><feGaussianBlur stdDeviation="1.8"/></filter>
            <filter id="relief" x="0" y="0" width="100%" height="100%" color-interpolation-filters="sRGB"><feTurbulence type="fractalNoise" baseFrequency="0.016 0.04" numOctaves="3" seed="8"/><feColorMatrix values="0 0 0 0 0.42  0 0 0 0 0.16  0 0 0 0 0.14  1.7 0 0 0 -0.6"/></filter>
          </defs>
          <g fill="#9a9895"><use href="#land" transform="translate(0 2)"/><use href="#land" transform="translate(0 4)"/><use href="#land" transform="translate(0 6)"/><use href="#land" transform="translate(0 8.2)"/></g>
          <path fill="#82807d" d="M817,591L843.3,616V624L817,599ZM868,620L879,629V637.5L868,628ZM915,634L930,639L922,643L915,642ZM837,684L845.3,698V706.5L837,692ZM888,705L923,698V706.5L888,713.5ZM1097,734L1144,755V763.5L1097,742.5ZM1157.3,758L1173.3,756V764.5L1157.3,766.5ZM1234,769L1252,777V785.5L1234,778Z"/>
          <path fill="#5c605d" stroke="#5c605d" d="M814.3,511.7L824,533.3L822,535L818,530L814.3,520ZM806.7,541.7L810,555L807.5,557L806.5,549ZM909.3,651L911.3,664.7L909,664ZM1048.7,413.3L1048.2,421.5L1045,439L1044,439.3Z"/>
          <g clip-path="url(#lc)">
            <use href="#land" fill="#da655f"/>
            <g filter="url(#soft)" fill="#7d2e2c">
              <path opacity=".14" d="M1010,376L1037,373L1047,412L1042,440L990,432L1004,405Z"/>
              <path opacity=".18" d="M990,432L1035,428L1014,444L1050,448L1030,456L1000,472L940,494L975,456Z"/>
              <path opacity=".22" d="M1072,466L1050,470L1030,480L1003,494L1020,510L1050,500L1070,520L1030,555L1020,600L1060,575L1130,560L1090,520L1078,490Z"/>
              <path opacity=".3" d="M1070,464L1048,458L1034,472L1000,492L1032,484L1056,468Z"/>
              <path opacity=".24" d="M850,492L905,480L960,482L1000,494L1040,505L1020,525L960,512L900,515L860,500Z"/>
              <path opacity=".22" d="M820,510L870,500L915,514L890,512L850,530L900,555L930,562L872,556L820,536Z"/>
              <path opacity=".36" d="M935,514L955,513L976,522L1000,532L1012,544L1018,560L1027,564L1014,562L1005,545L990,532L965,520Z"/>
              <path opacity=".26" d="M965,525L950,539L920,548L886,552L925,554L950,546Z"/>
              <path opacity=".3" d="M808,544L850,542L870,550L882,560L865,556L880,572L930,588L975,607L1008,618L965,612L915,600L880,580L840,578L812,556Z"/>
              <path opacity=".2" d="M815,590L850,590L890,592L900,602L850,606L900,620L945,628L990,635L955,640L880,628L840,616Z"/>
              <path opacity=".28" d="M1140,561L1100,576L1060,598L1010,610L1045,608L1085,588L1130,572Z"/>
              <path opacity=".16" d="M1100,540L1060,565L1026,578L1020,600L1045,575L1085,560Z"/>
              <path opacity=".18" d="M1168,580L1200,605L1220,638L1180,620L1130,630L1170,612L1100,622L1070,630L1060,615L1120,600Z"/>
              <path opacity=".24" d="M1110,642L1080,660L1040,664L1020,660L1050,655L1080,646Z"/>
              <path opacity=".2" d="M1000,608L1060,612L1110,630L1060,655L1020,660L1030,680L970,650L930,632Z"/>
              <path opacity=".38" d="M915,633L960,644L1005,660L1035,677L1062,693L1105,708L1090,718L1040,705L1000,690L965,668L925,650Z"/>
              <path opacity=".24" d="M845,686L885,692L940,682L975,688L1010,692L1050,700L1097,725L1100,736L1020,722L990,706L920,694L880,700L845,697Z"/>
              <path opacity=".45" d="M1040,710L1090,715L1140,714L1200,722L1240,733L1275,748L1310,780L1330,795L1400,842L1350,826L1310,792L1250,778L1140,756L1100,735L1060,718Z"/>
              <path opacity=".15" d="M1240,655L1285,684L1325,708L1290,705L1275,725L1240,700L1250,690L1220,680Z"/>
            </g>
            <g fill="#742a28">
              <path opacity=".3" d="M1150,717L1190,721L1218,728L1255,736L1275,748L1250,739L1215,733L1185,724Z"/>
              <path opacity=".3" d="M1275,748L1300,767L1320,785L1345,801L1300,776Z"/>
              <path opacity=".3" d="M1020,681L1060,700L1090,706L1103,708L1095,713L1070,705Z"/>
              <path opacity=".35" d="M980,521L1000,532L1009,539L1018,554L1026,564L1012,550L1000,534Z"/>
              <path opacity=".3" d="M890,505L905,509L915,514L900,510ZM812,555L845,572L849,579L830,570ZM858,542L870,552L878,560L868,557ZM1027,744L1060,740L1030,742ZM1000,616L1014,618L1000,617Z"/>
              <path opacity=".25" d="M1082,586L1060,597L1030,606L1065,600L1082,590ZM905,625L945,630L970,637L940,633ZM910,690L960,684L975,688L915,692Z"/>
            </g>
            <path fill="#e0675f" opacity=".7" d="M1022,650L1036,649L1028,656Z"/>
            <path fill="#e06861" opacity=".3" filter="url(#soft)" d="M1090,660L1150,645L1190,655L1230,690L1250,725L1180,715L1120,700L1070,690ZM965,378L1005,385L1000,420L960,440L945,410ZM925,555L970,530L1000,545L1010,600L960,600ZM1290,710L1322,712L1328,760L1375,812L1330,790L1290,745Z"/>
            <rect x="780" y="365" width="640" height="495" filter="url(#relief)" opacity=".26"/>
          </g>

          <!-- orientation axes -->
          <g stroke-width="1.3"><path d="M840.7,860L843,822" stroke="#17d41f"/><path d="M841,860L868,854" stroke="#d4d228"/><path d="M841,860L866,872" stroke="#c72130"/></g>
          <path d="M843,813L846.5,822L844,824L839.5,822Z" fill="#0df20d"/><path d="M868,849.5L873,853L872,856.5L868,858L865.5,853.5Z" fill="#a3a000"/><path d="M867,869L874,876L865,876.5L864,873.5Z" fill="#e80505"/>
          <g fill="none" stroke="#fff" stroke-width="1.2"><path d="M846,812.5H852.5L846.5,822.5H853M871,845L874.5,850L879,845M874.5,850L873,855"/><path d="M870,862.5L878,873.5M878,862.5L870,873.5" stroke-width="1.5"/></g>
        </svg>
      </div>
    </section>
  </div>
</main>
</body>
</html>
